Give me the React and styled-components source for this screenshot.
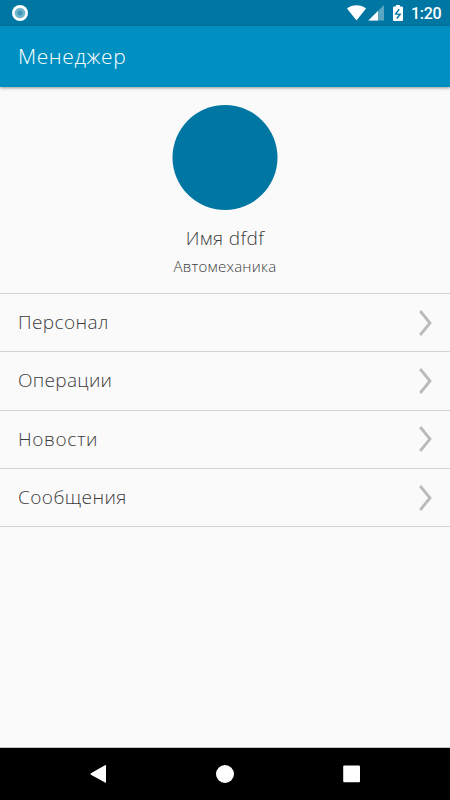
import React from "react";
import styled, { createGlobalStyle } from "styled-components";

const menuItems = [
  { title: "Персонал", tracking: "0.4px" },
  { title: "Операции", tracking: "0.3px" },
  { title: "Новости", tracking: "0.65px" },
  { title: "Сообщения", tracking: "0.45px" },
];

export default function App() {
  return (
    <Screen>
      <GlobalStyle />
      <StatusBar>
        <SyncIcon viewBox="0 0 16 16">
          <circle cx="8" cy="8" r="8" fill="#fff" />
          <circle cx="8" cy="8" r="5.3" fill="#72b4cb" />
          <circle cx="8" cy="8" r="2.5" fill="#3f98b8" />
        </SyncIcon>
        <SystemIcons viewBox="0 0 56 16">
          <path d="M0 3.4C5.6-.9 13.4-.9 19 3.4L9.5 15.6z" fill="#fff" />
          <path d="M37 0v15.6H21.4z" fill="#5ba7c1" />
          <path d="M31 6v9.6h-9.6z" fill="#fff" />
          <path
            d="M48.9 0h4v1.6h2q1.1 0 1.1 1.1v12.2q0 1.1-1.1 1.1h-7.8q-1.1 0-1.1-1.1V2.7q0-1.1 1.1-1.1h1.8z"
            fill="#fff"
          />
          <path
            d="M52.2 4.2L48.6 8.9l4.6.4-3.4 4.2"
            fill="none"
            stroke="#0077a3"
            strokeWidth="1.4"
          />
        </SystemIcons>
        <Clock>1:20</Clock>
      </StatusBar>
      <Toolbar>
        <Title>Менеджер</Title>
      </Toolbar>
      <Profile>
        <Avatar viewBox="0 0 106 106">
          <circle cx="53" cy="52.5" r="52.5" />
        </Avatar>
        <Name>Имя dfdf</Name>
        <Company>Автомеханика</Company>
      </Profile>
      <Menu>
        {menuItems.map((item) => (
          <MenuItem key={item.title}>
            <Label $tracking={item.tracking}>{item.title}</Label>
            <Chevron viewBox="0 0 14 28">
              <path d="M2.2 2L12 14 2.2 26" />
            </Chevron>
          </MenuItem>
        ))}
      </Menu>
      <NavBar>
        <NavIcon viewBox="0 0 20 20">
          <path d="M16 1v18L.9 10.7q-.9-.7 0-1.4L15 1.2z" />
        </NavIcon>
        <NavIcon viewBox="0 0 20 20">
          <circle cx="9" cy="10" r="9" />
        </NavIcon>
        <NavIcon viewBox="0 0 20 20">
          <rect x="1.2" y="1.4" width="16.8" height="16.8" rx="1" />
        </NavIcon>
      </NavBar>
    </Screen>
  );
}

const GlobalStyle = createGlobalStyle`
  * {
    box-sizing: border-box;
  }
  body {
    margin: 0;
  }
`;

const Screen = styled.div`
  display: flex;
  flex-direction: column;
  width: 450px;
  height: 800px;
  overflow: hidden;
  background-color: #fafafa;
  color: #3c3c3c;
  font-family: "Open Sans", sans-serif;
  font-weight: 300;
`;

const StatusBar = styled.header`
  display: flex;
  align-items: center;
  flex: 0 0 26px;
  padding: 0 8px 0 12px;
  background-color: #0077a3;
`;

const SyncIcon = styled.svg`
  width: 16px;
  height: 16px;
`;

const SystemIcons = styled.svg`
  width: 56px;
  height: 16px;
  margin-left: auto;
`;

const Clock = styled.span`
  width: 31px;
  margin-left: 8px;
  padding-top: 2px;
  color: #fff;
  font-family: Roboto, sans-serif;
  font-size: 16px;
  font-weight: 500;
  letter-spacing: -0.3px;
  line-height: 24px;
`;

const Toolbar = styled.div`
  display: flex;
  align-items: center;
  flex: 0 0 61px;
  padding: 0 18px 1px;
  background-color: #008fc1;
  box-shadow: 0 1px 3px rgba(0, 0, 0, 0.4);
`;

const Title = styled.h1`
  margin: 0;
  color: #fff;
  font-size: 21px;
  font-weight: 300;
  letter-spacing: 0.6px;
`;

const Profile = styled.section`
  display: flex;
  flex-direction: column;
  align-items: center;
  flex: 0 0 206px;
  padding-top: 18px;
`;

const Avatar = styled.svg`
  width: 106px;
  height: 106px;
  fill: #0077a3;
`;

const Name = styled.div`
  margin-top: 13px;
  font-size: 19px;
  letter-spacing: 0.4px;
  line-height: 28px;
`;

const Company = styled.div`
  margin-top: 4px;
  font-size: 15px;
  letter-spacing: 0.25px;
  line-height: 20px;
`;

const Menu = styled.nav`
  flex: 1;
  border-top: 1px solid #d3d3d3;
`;

const MenuItem = styled.div`
  display: flex;
  align-items: center;
  justify-content: space-between;
  height: 58.3px;
  padding: 0 18px;
  border-bottom: 1px solid #d3d3d3;
`;

const Label = styled.span`
  padding-bottom: 1px;
  font-size: 19px;
  letter-spacing: ${({ $tracking }) => $tracking};
`;

const Chevron = styled.svg`
  width: 14px;
  height: 28px;
  fill: none;
  stroke: #bababa;
  stroke-width: 2.8;
`;

const NavBar = styled.footer`
  display: flex;
  align-items: center;
  justify-content: space-between;
  flex: 0 0 53px;
  padding: 0 88px 0 90px;
  border-top: 1px solid #c4c4c4;
  background-color: #000;
`;

const NavIcon = styled.svg`
  width: 20px;
  height: 20px;
  fill: #fff;
`;
